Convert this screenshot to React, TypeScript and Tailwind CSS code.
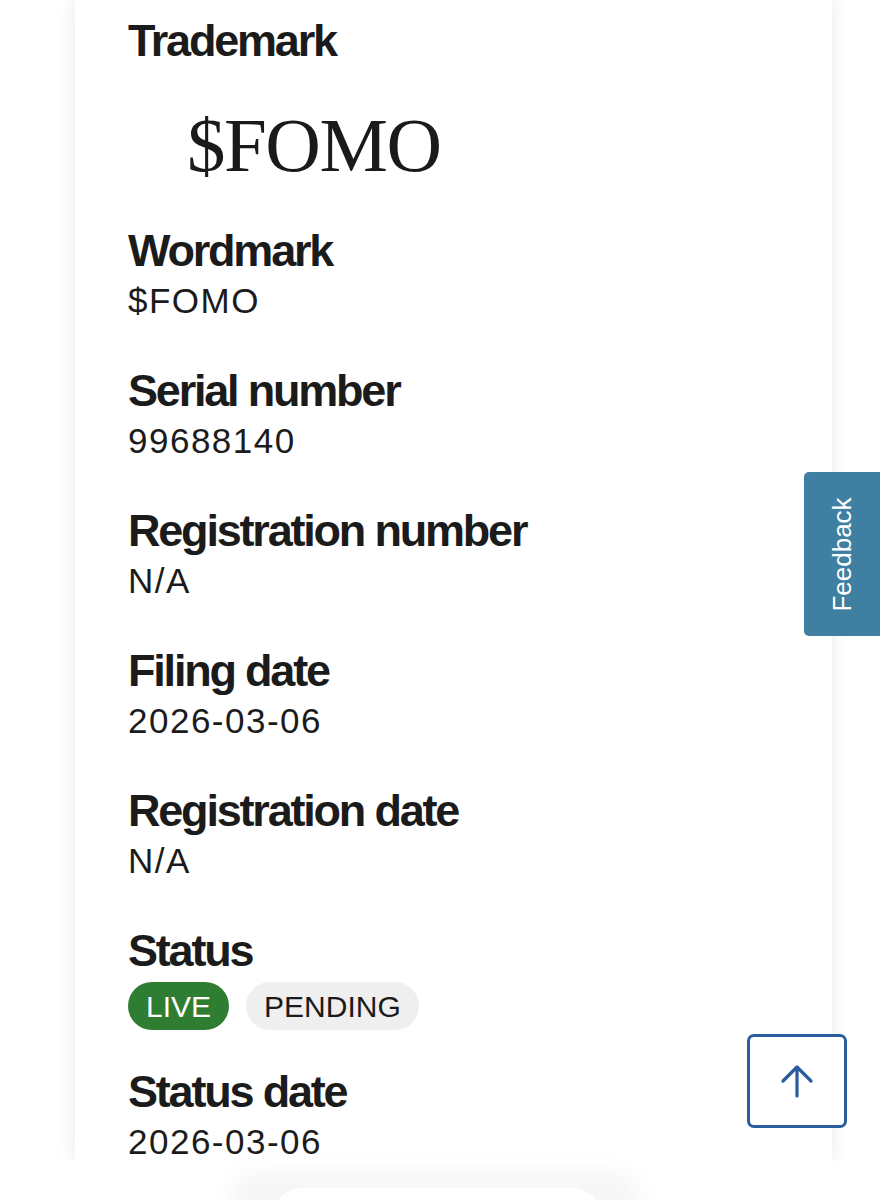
import React from "react";

type Field = {
  label: string;
  value: string;
};

const fields: Field[] = [
  { label: "Wordmark", value: "$FOMO" },
  { label: "Serial number", value: "99688140" },
  { label: "Registration number", value: "N/A" },
  { label: "Filing date", value: "2026-03-06" },
  { label: "Registration date", value: "N/A" },
];

const heading =
  "font-['Liberation_Sans',Arial,sans-serif] font-bold text-[45px] leading-[50px] tracking-[-2.2px] text-[#1b1b1b]";
const valueText =
  "mt-[3px] font-['Liberation_Sans',Arial,sans-serif] text-[35px] leading-[44px] tracking-[1.5px] text-[#1b1b1b]";

function ArrowUp() {
  return (
    <svg width="34" height="34" viewBox="0 0 34 34" fill="none">
      <path
        d="M17 32V3M3 17L17 3l14 14"
        stroke="#2a5d9f"
        strokeWidth="3.2"
        strokeLinecap="round"
        strokeLinejoin="round"
      />
    </svg>
  );
}

export default function App() {
  return (
    <div className="relative h-[1200px] w-[880px] overflow-hidden bg-white">
      <div className="ml-[75px] h-[1161px] w-[757px] bg-white pl-[53px] pt-[16px] shadow-[0_0_18px_rgba(0,0,0,0.09)]">
        <div className="flex flex-col gap-[43px]">
          <section>
            <h2 className={heading}>Trademark</h2>
            <div className="h-[117px] pl-[59px] pt-[41px]">
              <span className="font-['Liberation_Serif','Times_New_Roman',serif] text-[77px] leading-[76px] tracking-[-1.5px] text-[#1a1a1a]">
                $FOMO
              </span>
            </div>
          </section>

          {fields.map((f) => (
            <section key={f.label}>
              <h2 className={heading}>{f.label}</h2>
              <p className={valueText}>{f.value}</p>
            </section>
          ))}

          <section>
            <h2 className={heading}>Status</h2>
            <div className="-mb-[6px] mt-[6px] flex gap-[17px] font-['Liberation_Sans',Arial,sans-serif] text-[30px]">
              <span className="flex h-[48px] items-center rounded-full bg-[#2e7d32] px-[18px] text-white">
                LIVE
              </span>
              <span className="flex h-[48px] items-center rounded-full bg-[#efefef] px-[18px] text-[#1b1b1b]">
                PENDING
              </span>
            </div>
          </section>

          <section>
            <h2 className={heading}>Status date</h2>
            <p className={valueText}>2026-03-06</p>
          </section>
        </div>
      </div>

      {/* feedback tab */}
      <div className="absolute left-[804px] top-[472px] flex h-[164px] w-[76px] items-center justify-center rounded-l-[5px] bg-[#3f7fa2]">
        <span className="-rotate-90 whitespace-nowrap font-['Liberation_Sans',Arial,sans-serif] text-[26px] text-white">
          Feedback
        </span>
      </div>

      {/* back to top */}
      <button className="absolute left-[747px] top-[1034px] flex h-[94px] w-[100px] items-center justify-center rounded-[7px] border-[3px] border-[#2a5d9f] bg-white">
        <ArrowUp />
      </button>

      {/* browser toolbar blur */}
      <div className="absolute bottom-0 left-0 h-[39px] w-full bg-white">
        <div className="absolute left-[230px] top-[10px] h-[60px] w-[410px] rounded-[40px] bg-[#f6f6f6] blur-[10px]" />
        <div className="absolute left-[272px] top-[27px] h-[60px] w-[330px] rounded-[30px] bg-white" />
      </div>
    </div>
  );
}
